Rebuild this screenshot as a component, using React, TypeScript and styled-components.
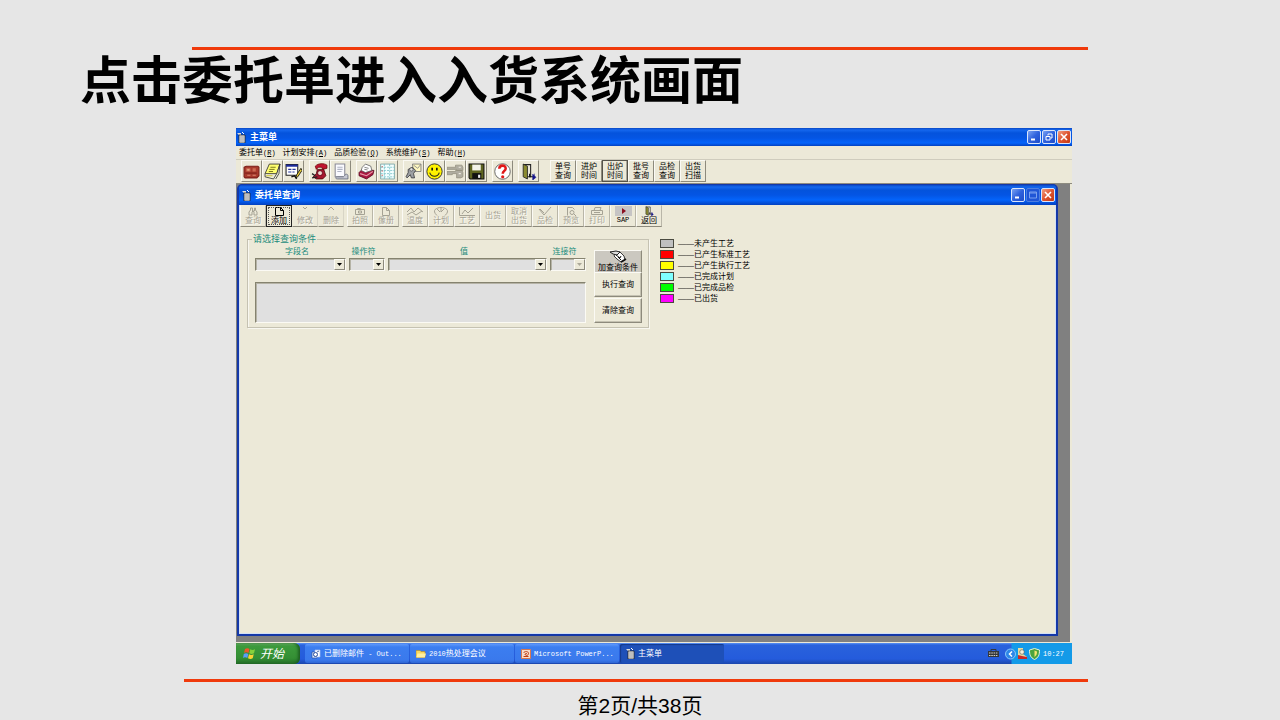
import React from 'react';
import styled, { createGlobalStyle, css } from 'styled-components';

const cjk = "'Liberation Sans', 'Noto Sans CJK SC', sans-serif";
const face = '#ece9d8';

const GlobalStyle = createGlobalStyle`
  *, *::before, *::after { box-sizing: border-box; }
  body { margin: 0; background: #e6e6e6; font-family: ${cjk}; color: #000; }
  button, select, textarea { font: inherit; color: inherit; margin: 0; padding: 0; border: 0; border-radius: 0; }
  svg { display: block; flex: none; }
`;

/* ---------- slide ---------- */
const Slide = styled.main`
  min-height: 100vh;
  padding-top: 47px;
  display: flex;
  flex-direction: column;
`;
const Rule = styled.hr<{ $left: string }>`
  width: auto;
  height: 3px;
  margin: 0 15% 0 ${p => p.$left};
  border: 0;
  background: #f03a0c;
`;
const Title = styled.h1`
  margin: 0 0 23px;
  padding-left: 80px;
  font: 700 51px/55px 'Noto Sans CJK SC', sans-serif;
`;
const PageNumber = styled.footer`
  padding-top: 9px;
  text-align: center;
  font-size: 21px;
  line-height: 29px;
`;
const Desktop = styled.section`
  margin: 0 208px 15px 236px;
  background: ${face};
  font-size: 8px;
  line-height: 10px;
`;

/* ---------- windows ---------- */
const TitleBar = styled.header<{ $child?: boolean }>`
  display: flex;
  align-items: center;
  gap: 4px;
  height: ${p => (p.$child ? 20 : 18)}px;
  padding: 0 1px 0 ${p => (p.$child ? 3 : 1)}px;
  background: linear-gradient(#0a48c4 0, #1467ee 2px, #0453dc 5px, #0455e4 10px, #0464fb 15px, #0341c0 100%);
  border-radius: ${p => (p.$child ? '4px 4px 0 0' : '0')};
  color: #fff;
  white-space: nowrap;
`;
const Caption = styled.h2`
  flex: 1;
  margin: 0;
  font-size: 9px;
  line-height: 12px;
  font-weight: 700;
`;
const WinButtons = styled.div`
  display: flex;
  gap: 1px;
`;
const WinButton = styled.button<{ $tone?: 'close' | 'off' }>`
  width: 14px;
  height: 14px;
  display: grid;
  place-items: center;
  border: 1px solid ${p => (p.$tone === 'off' ? '#4d7fe0' : '#dbe6fb')};
  border-radius: 2px;
  background: ${p =>
    p.$tone === 'close'
      ? 'linear-gradient(135deg, #f0a083, #de5430 50%, #c53a12)'
      : p.$tone === 'off'
      ? '#1f55d6'
      : 'linear-gradient(135deg, #7aa2f2, #2f62dd 50%, #1e4cc8)'};
`;
const MenuBar = styled.nav`
  display: flex;
  gap: 7px;
  height: 14px;
  padding: 0 3px;
  border-bottom: 1px solid #cfccbd;
`;
const MenuItem = styled.button`
  background: none;
  line-height: 12px;
  white-space: nowrap;
`;
const Latin = styled.span`
  font-family: 'Liberation Mono', monospace;
  font-size: 7px;
`;
const Toolbar = styled.div`
  display: flex;
  gap: 5px;
  height: 24px;
  padding: 0 5px 1px;
  border-bottom: 1px solid #8d8b80;
`;
const Group = styled.div<{ $wide?: boolean }>`
  display: flex;
  margin-left: ${p => (p.$wide ? 6 : 0)}px;
`;
const raised = css`
  background: ${face};
  border: 1px solid;
  border-color: #fbfaf4 #8d8a7c #8d8a7c #fbfaf4;
`;
const ToolButton = styled.button`
  ${raised}
  width: 21px;
  height: 22px;
  padding-top: 1px;
  display: grid;
  place-items: center;
`;
const TextTool = styled.button<{ $active?: boolean }>`
  ${raised}
  width: 26px;
  height: 22px;
  line-height: 9px;
  ${p => p.$active && 'border-color: #55534a; box-shadow: inset -1px -1px #a9a698;'}
`;

const Mdi = styled.div`
  padding: 0 12px 6px 1px;
  margin-right: 2px;
  background: #808080;
`;
const Child = styled.section`
  border: 1px solid #1438a8;
  border-width: 1px 2px 2px 2px;
  border-radius: 5px 5px 0 0;
  background: #0453dc;
`;
const Client = styled.div`
  min-height: 429px;
  background: ${face};
  border: 1px solid #d3e0f5;
  border-top: 0;
`;
const ChildTools = styled.div`
  display: flex;
  gap: 3px;
  height: 22px;
`;
const ChildTool = styled.button<{ $state?: 'focus' | 'on' | 'flat' }>`
  ${raised}
  width: 26px;
  height: 22px;
  display: flex;
  flex-direction: column;
  align-items: center;
  justify-content: flex-end;
  line-height: 9px;
  padding-bottom: 1px;
  border-top-color: ${face};
  border-right-color: #b9b6a8;
  color: #a5a294;
  text-shadow: 1px 1px #fbfaf4;
  ${p => (p.$state === 'focus' || p.$state === 'on') && 'color: #000; text-shadow: none;'}
  ${p => p.$state === 'flat' && `border-left-color: ${face}; border-right-color: #d8d5c6;`}
  ${p => p.$state === 'focus' && 'border-color: #222; outline: 1px dotted #555; outline-offset: -3px;'}
`;
const Lines = styled.span`
  margin: auto 0;
  line-height: 9px;
`;

/* ---------- query form ---------- */
const Work = styled.div`
  display: flex;
  align-items: flex-start;
  gap: 11px;
  padding: 7px;
`;
const Query = styled.fieldset`
  width: 402px;
  margin: 0;
  padding: 0 6px 4px 7px;
  border: 1px solid #c5c2b2;
  box-shadow: inset 1px 0 #f8f7f0, 1px 1px #f8f7f0;
  display: flex;
  justify-content: space-between;
`;
const Legend = styled.legend`
  padding: 0 1px;
  margin-left: -3px;
  font-size: 9px;
  line-height: 10px;
  color: #1c8c7c;
`;
const Fields = styled.div`
  display: grid;
  grid-template-columns: 91px 36px 159px 36px;
  column-gap: 3px;
  align-content: start;
`;
const Field = styled.label`
  display: flex;
  flex-direction: column;
  gap: 2px;
  color: #1c8c7c;
  line-height: 9px;
  padding-top: 3px;
`;
const FieldName = styled.span`
  padding-right: 7px;
  text-align: center;
`;
const sunken = css`
  background: #e0e0e0;
  border: 1px solid;
  border-color: #85836f #fbfaf4 #fbfaf4 #85836f;
  box-shadow: inset 1px 1px #b5b3a6;
`;
const Combo = styled.span`
  ${sunken}
  display: flex;
  height: 13px;
`;
const Select = styled.select`
  flex: 1;
  min-width: 0;
  appearance: none;
  background: transparent;
`;
const Arrow = styled.span<{ $off?: boolean }>`
  ${raised}
  width: 11px;
  display: grid;
  place-items: center;
  color: ${p => (p.$off ? '#aaa799' : '#000')};
`;
const Conditions = styled.textarea`
  ${sunken}
  grid-column: 1 / -1;
  height: 41px;
  margin-top: 11px;
  resize: none;
`;
const Actions = styled.div`
  width: 48px;
  padding-top: 6px;
  display: flex;
  flex-direction: column;
  gap: 1px;
`;
const Action = styled.button<{ $hot?: boolean }>`
  ${raised}
  height: ${p => (p.$hot ? 24 : 25)}px;
  box-shadow: inset -1px -1px #c5c2b2;
  display: flex;
  flex-direction: column;
  align-items: center;
  justify-content: ${p => (p.$hot ? 'flex-end' : 'center')};
  ${p => p.$hot && 'background: #cbc8c0; margin-bottom: -3px;'}
`;
const KeyList = styled.ul`
  margin: 4px 0 0;
  padding: 0;
  list-style: none;
`;
const KeyItem = styled.li`
  display: flex;
  align-items: center;
  gap: 4px;
  height: 11px;
  white-space: nowrap;
`;
const Swatch = styled.span<{ $color: string }>`
  width: 14px;
  height: 9px;
  border: 1px solid #4a4a40;
  background: ${p => p.$color};
`;

/* ---------- taskbar ---------- */
const Taskbar = styled.footer`
  display: flex;
  height: 21px;
  margin-top: 1px;
  background: linear-gradient(#5a93f5 0, #2a62dc 2px, #245bdc 16px, #1b46ac 100%);
  color: #fff;
`;
const Start = styled.button`
  width: 64px;
  display: flex;
  align-items: center;
  gap: 4px;
  padding-left: 7px;
  border-radius: 0 6px 6px 0;
  background: linear-gradient(#6db56b 0, #3c9a3c 3px, #348f34 15px, #256f28 100%);
  box-shadow: inset -2px 0 3px #1d5f22;
  color: #fff;
  font-size: 12px;
  font-style: italic;
`;
const Tasks = styled.div`
  flex: 1;
  display: flex;
  gap: 1px;
  padding: 1px 5px;
`;
const Task = styled.button<{ $active?: boolean }>`
  flex: 0 1 104px;
  display: flex;
  align-items: center;
  gap: 3px;
  padding-left: 6px;
  border-radius: 2px;
  background: ${p => (p.$active ? '#1e50b8' : 'linear-gradient(#5e98fa, #3c7ef0 3px, #3a79ec 16px, #2f66d4)')};
  box-shadow: ${p => (p.$active ? 'inset 1px 1px 1px #143a8c' : 'none')};
  color: #fff;
  white-space: nowrap;
`;
const Keyboard = styled.div`
  display: grid;
  place-items: center;
  padding-right: 6px;
`;
const Tray = styled.div`
  width: 67px;
  display: flex;
  align-items: center;
  gap: 1px;
  background: linear-gradient(90deg, transparent 6px, #139ae8 7px);
`;
const Clock = styled.time`
  padding-left: 2px;
  font: 7px/10px 'Liberation Mono', monospace;
`;

/* ---------- drawings ---------- */
const Svg = ({ w = 17, h = 17, box = '0 0 16 16', children }: { w?: number; h?: number; box?: string; children: React.ReactNode }) => (
  <svg width={w} height={h} viewBox={box} fill="none" aria-hidden="true">{children}</svg>
);

const AppIcon = () => (
  <Svg w={9} h={11} box="0 0 9 11">
    <path d="M0 1h4v2H2z" fill="#ddd" />
    <path d="M2 3h6v8H2z" fill="#eee" stroke="#222" strokeWidth=".8" />
    <path d="M3.500 5h1M5.500 5h1M3.500 7h1M5.500 7h1M3.500 9h1M5.500 9h1" stroke="#333" strokeWidth="1" />
    <path d="M5 0l2 2" stroke="#fff" />
  </Svg>
);

const Door = ({ size = 17 }: { size?: number }) => (
  <Svg w={size} h={size}>
    <path d="M3 1.500h7V13H7" stroke="#222" />
    <path d="M3 1l4 2v12l-4-2z" fill="#8c8c30" stroke="#222" strokeWidth=".8" />
    <path d="M9 10v3h4" stroke="#111" />
    <path d="M12 10.500l3 3-3 2.500zM13.500 10v2" fill="#14148c" stroke="#14148c" strokeWidth=".6" />
  </Svg>
);

const mainIcons: Record<string, React.ReactNode> = {
  委托单: (
    <Svg>
      <path d="M1 4l2-1h11l1 1v8l-2 2H2l-1-1z" fill="#a83a2c" stroke="#7c1f18" />
      <path d="M3 5h4v3H3zM9 5h3v3H9z" fill="#cc6c54" />
      <path d="M4 6h2v1H4z" fill="#f0c898" />
      <path d="M2 9.500h11" stroke="#7c2018" />
      <path d="M4 11.500h3M9 11.500h3" stroke="#d88870" />
    </Svg>
  ),
  便笺: (
    <Svg>
      <path d="M5 1h10l-3 9H1z" fill="#ffff70" stroke="#333" strokeWidth=".8" />
      <path d="M1 10v3l8 2 3-5 3-9-1 9-3 5" fill="#f8f8e0" stroke="#333" strokeWidth=".8" />
      <path d="M6 4h5M5 6h5M4.500 8h4" stroke="#77761a" strokeWidth=".9" />
      <path d="M2 12h6" stroke="#c8c030" />
    </Svg>
  ),
  计划: (
    <Svg>
      <path d="M1 1.500h11v10H1z" fill="#fff" stroke="#222" />
      <path d="M1 1.500h11v2H1z" fill="#1c2a9c" />
      <path d="M3 6h3M7 6h3M3 8.500h3M7 8.500h2" stroke="#26369c" />
      <path d="M15 5l-4 6-1 3 2-1 4-6z" fill="#e8cf38" stroke="#111" strokeWidth=".8" />
      <path d="M6 13l3-1 2 3" stroke="#111" strokeWidth="1.300" />
    </Svg>
  ),
  电话: (
    <Svg>
      <path d="M4 3c3-3 8-3 11-1v3l-4 1-1-2H7L5 6z" fill="#c01530" stroke="#600" strokeWidth=".7" />
      <path d="M6 6l6 0 2 6-3 3H5l-3-2 3-3z" fill="#a81830" stroke="#400" strokeWidth=".7" />
      <circle cx="8.500" cy="9.500" r="2.300" fill="#f4d8d0" stroke="#501" strokeWidth=".7" />
      <path d="M1 10l3 2M1 14l5-1" stroke="#222" strokeWidth="1.200" />
    </Svg>
  ),
  文档: (
    <Svg>
      <path d="M3 1h9v12H3z" fill="#fafaff" stroke="#8c8c98" />
      <path d="M5 4h5M5 6h5M5 8h4" stroke="#b0b4c4" />
      <path d="M12 12c0-2 3-2 3 0v3H5c-2 0-2-2 0-2h6" fill="#c8cad4" stroke="#666c7c" strokeWidth=".8" />
    </Svg>
  ),
  归档: (
    <Svg>
      <path d="M1 9l3-3 11 1-1 4-6 4-7-3z" fill="#a81840" stroke="#5a0c24" strokeWidth=".8" />
      <path d="M4 4l3-3 5 2 1 4-6 2-4-2z" fill="#fff" stroke="#555" strokeWidth=".7" />
      <path d="M6 4l4 1M6 6l3 .5" stroke="#777" strokeWidth=".8" />
      <path d="M2 10l6 2 6-4" stroke="#e898a8" />
    </Svg>
  ),
  表格: (
    <Svg>
      <path d="M1.500 1h13v14h-13z" fill="#f4ffff" stroke="#78a4a4" strokeWidth=".8" />
      <path d="M1.500 4h13M1.500 7h13M1.500 10h13M1.500 13h13M5 1v14M10 1v14" stroke="#6cbcc4" strokeWidth=".7" strokeDasharray="2 1" />
      <path d="M3 3v1M3 7v1M3 11v1" stroke="#c03030" />
    </Svg>
  ),
  用户: (
    <Svg>
      <path d="M7 1h8v7H8z" fill="#fff8c0" stroke="#777" strokeWidth=".8" />
      <path d="M8 2l4 3 3-4" stroke="#888" strokeWidth=".8" />
      <path d="M3 6l4-2 3 3-2 3 1 4H6l-1-3-3 3-1-1 2-4z" fill="#9da0a4" stroke="#3c3c40" strokeWidth=".8" />
      <circle cx="6" cy="6" r="1.600" fill="#e0e0e0" stroke="#444" strokeWidth=".6" />
    </Svg>
  ),
  笑脸: (
    <Svg>
      <circle cx="8" cy="8" r="7.200" fill="#fff200" stroke="#333" strokeWidth=".9" />
      <path d="M5.800 4.500v2.500M10.200 4.500v2.500" stroke="#111" strokeWidth="1.500" />
      <path d="M3.500 9c1.500 4.600 7.500 4.600 9 0" stroke="#222" strokeWidth="1" />
    </Svg>
  ),
  钥匙: (
    <Svg>
      <path d="M0 4h8V2h6l1 2v3H9V6H0zM0 8h8V7h6l1 2v4l-2 1H9v-4H5v1H0z" fill="#b0ada0" stroke="#94917f" strokeWidth=".7" />
      <path d="M11 4h2M11 10h2" stroke="#efece0" />
    </Svg>
  ),
  保存: (
    <Svg>
      <path d="M1 1h14v14H2l-1-1z" fill="#5e6420" stroke="#111" />
      <path d="M4 1.500h8V7H4z" fill="#f4f4e8" />
      <path d="M4 9.500h8.500V15H4z" fill="#111" />
      <path d="M9.500 11h2v3h-2z" fill="#eee" />
    </Svg>
  ),
};

const HelpIcon = () => (
  <Svg>
    <circle cx="8" cy="8" r="7.300" fill="#fff" stroke="#555" strokeWidth=".8" />
    <path d="M5 5.500C5 1.500 11 1.500 11 5.200c0 2.200-2.800 2.300-2.800 4.800" stroke="#e01818" strokeWidth="2.400" />
    <circle cx="8.200" cy="13" r="1.500" fill="#e01818" />
  </Svg>
);

const Glyph = ({ d }: { d: string }) => (
  <Svg w={18} h={9} box="0 0 18 9">
    <path d={d} stroke="currentColor" strokeWidth="1" />
  </Svg>
);

const Triangle = () => (
  <Svg w={5} h={3} box="0 0 5 3"><path d="M0 0h5L2.500 3z" fill="currentColor" /></Svg>
);

const PenHand = () => (
  <Svg w={18} h={13} box="0 0 18 13">
    <path d="M6 4l5-2 4 4 1 4-4 2-4-3-3-3z" fill="#fff" stroke="#222" strokeWidth=".9" />
    <path d="M1 2l6-1 4 1-3 3-4-1z" fill="#ddd" stroke="#222" strokeWidth="1" />
    <path d="M7 5l4 3 1-2M9 7l3 3" stroke="#111" strokeWidth="1" />
    <path d="M12 12l5-3" stroke="#111" strokeWidth="1.800" />
  </Svg>
);

const Minimize = () => <Svg w={8} h={8} box="0 0 8 8"><path d="M1 6.500h4" stroke="#fff" strokeWidth="2" /></Svg>;
const Restore = () => (
  <Svg w={8} h={8} box="0 0 8 8"><path d="M3 2.500V1h4v4H5.500M1 3.500h4V7H1z" stroke="#fff" /></Svg>
);
const Maximize = () => <Svg w={8} h={8} box="0 0 8 8"><path d="M.5 1h7v6h-7zM.5 2h7" stroke="#7aa0ee" /></Svg>;
const Close = () => <Svg w={8} h={8} box="0 0 8 8"><path d="M1 1l6 6M7 1L1 7" stroke="#fff" strokeWidth="1.600" /></Svg>;

const Flag = () => (
  <Svg w={13} h={13} box="0 0 13 13">
    <path d="M2 2c1.500-1 3-1 4.500 0L5.500 6C4 5 2.500 5 1 6z" fill="#f0562c" />
    <path d="M7.300 2.300c1.500 1 3 1 4.700 0L11 6.300c-1.500 1-3 1-4.700 0z" fill="#86d03c" />
    <path d="M.8 7c1.500-1 3-1 4.500 0l-1 4C3 10 1 10 0 11z" fill="#5c9cf8" />
    <path d="M6 7.300c1.500 1 3 1 4.700 0l-1 4c-1.500 1-3 1-4.700 0z" fill="#fcd434" />
  </Svg>
);
const MailIcon = () => (
  <Svg w={10} h={10} box="0 0 10 10">
    <path d="M1 3h5v6H1z" fill="#dce8fc" stroke="#2c50a0" strokeWidth=".7" />
    <path d="M4 1h5v7H4z" fill="#fff" stroke="#a8c0f0" strokeWidth=".7" />
    <circle cx="4.500" cy="5.500" r="2" fill="#fff" stroke="#284c9c" />
    <path d="M6 3l2-1" stroke="#506ca8" />
  </Svg>
);
const FolderIcon = () => (
  <Svg w={10} h={10} box="0 0 10 10">
    <path d="M0 1.500h4l1 1h4v6H0z" fill="#f8d860" stroke="#b88c1c" strokeWidth=".6" />
    <path d="M1.500 4.500H10L8.800 8.500H.3z" fill="#fff0a0" />
  </Svg>
);
const SlidesIcon = () => (
  <Svg w={10} h={10} box="0 0 10 10">
    <path d="M.5.500h9v9h-9z" fill="#f8dccc" stroke="#d87850" />
    <path d="M2.500 4c1-2 5-2 5 .5S4 7 4 5l2-.5" stroke="#c03c14" />
    <path d="M2.500 7.500h5" stroke="#c03c14" />
  </Svg>
);

/* ---------- data ---------- */
const menus = [['委托单', 'R'], ['计划安排', 'A'], ['品质检验', 'Q'], ['系统维护', 'S'], ['帮助', 'H']];
const toolGroups = [['委托单', '便笺', '计划'], ['电话', '文档'], ['归档', '表格'], ['用户', '笑脸', '钥匙', '保存']];
const textTools = [['单号', '查询'], ['进炉', '时间'], ['出炉', '时间'], ['批号', '查询'], ['品检', '查询'], ['出货', '扫描']];

type Tool = { label: string; d?: string; state?: 'focus' | 'on' | 'flat' };
const childTools: Tool[][] = [
  [
    { label: '查询', d: 'M6.500 1v2L5 5v3h3V5l1-1 1 1v3h3V5l-1.500-2V1h-1v3h-2V1z' },
    { label: '添加', d: 'M5.500.5h5l3 3v5h-8zM10.500.5v3h3', state: 'focus' },
    { label: '修改', d: 'M7 0l2 2 2-2', state: 'flat' },
    { label: '删除', d: 'M6 3l3-3 3 3', state: 'flat' },
  ],
  [
    { label: '拍照', d: 'M4.500 2.500h9v5h-9zM6.500 2.500v-1h3v1M7.500 4h3v2h-3z' },
    { label: '像册', d: 'M5.500.5h4l3 3v5h-7zM9.500.5v3h3' },
  ],
  [
    { label: '温度', d: 'M1 5l4-4 3 4 4-4 5 4M1 8l5-3 4 3 6-4' },
    { label: '计划', d: 'M5 8.500C-1 3 5 .5 9 .5S19 3 13 8.500M9 1v4l3-3M5 2l3 3' },
    { label: '工艺', d: 'M1.500 0v8.500H17M4 7l3-4 3 3 5-5' },
    { label: '出货' },
    { label: '取消出货' },
    { label: '品检', d: 'M3 2l5 6 7-8M4 2l4 4' },
    { label: '预览', d: 'M5.500 8.500v-8h5l2 2M10 3.500a2 2 0 110 4 2 2 0 010-4M12 7l2 2' },
    { label: '打印', d: 'M6 3.500l1-3h6l-1 3M3.500 3.500h11v4h-11zM6 5.500h6' },
    { label: 'SAP', state: 'on' },
    { label: '返回', state: 'on' },
  ],
];
const keys = [
  ['#c0c0c0', '未产生工艺'],
  ['#ff0000', '已产生标准工艺'],
  ['#ffff00', '已产生执行工艺'],
  ['#80ffff', '已完成计划'],
  ['#00ff00', '已完成品检'],
  ['#ff00ff', '已出货'],
];
const fields = ['字段名', '操作符', '值', '连接符'];

const ToolContent = ({ tool }: { tool: Tool }) => {
  if (tool.label === '取消出货') return <Lines>取消<br />出货</Lines>;
  if (tool.label === '出货') return <Lines>出货</Lines>;
  if (tool.label === 'SAP')
    return (
      <>
        <Svg w={17} h={10} box="0 0 17 10">
          <path d="M0 0h17v10H0z" fill="#c6c4c4" />
          <path d="M7 2l4 3-4 3z" fill="#8c1020" />
        </Svg>
        <Latin>SAP</Latin>
      </>
    );
  if (tool.label === '返回') return <><Door size={10} />返回</>;
  return <>{tool.d && <Glyph d={tool.d} />}{tool.label}</>;
};

export default function App() {
  return (
    <Slide>
      <GlobalStyle />
      <Rule $left="15%" />
      <Title>点击委托单进入入货系统画面</Title>
      <Desktop>
        <TitleBar>
          <AppIcon />
          <Caption>主菜单</Caption>
          <WinButtons>
            <WinButton aria-label="最小化"><Minimize /></WinButton>
            <WinButton aria-label="还原"><Restore /></WinButton>
            <WinButton aria-label="关闭" $tone="close"><Close /></WinButton>
          </WinButtons>
        </TitleBar>
        <MenuBar>
          {menus.map(([name, key]) => (
            <MenuItem key={name}>{name}<Latin>(<u>{key}</u>)</Latin></MenuItem>
          ))}
        </MenuBar>
        <Toolbar>
          {toolGroups.map(group => (
            <Group key={group[0]}>
              {group.map(name => <ToolButton key={name} aria-label={name}>{mainIcons[name]}</ToolButton>)}
            </Group>
          ))}
          <Group><ToolButton aria-label="帮助"><HelpIcon /></ToolButton></Group>
          <Group><ToolButton aria-label="退出"><Door /></ToolButton></Group>
          <Group $wide>
            {textTools.map(([a, b], i) => (
              <TextTool key={a + b} $active={i === 2}>{a}<br />{b}</TextTool>
            ))}
          </Group>
        </Toolbar>
        <Mdi>
          <Child>
            <TitleBar $child>
              <AppIcon />
              <Caption>委托单查询</Caption>
              <WinButtons>
                <WinButton aria-label="最小化"><Minimize /></WinButton>
                <WinButton aria-label="最大化" $tone="off"><Maximize /></WinButton>
                <WinButton aria-label="关闭" $tone="close"><Close /></WinButton>
              </WinButtons>
            </TitleBar>
            <Client>
              <ChildTools>
                {childTools.map((group, i) => (
                  <Group key={i}>
                    {group.map(tool => (
                      <ChildTool key={tool.label} $state={tool.state}><ToolContent tool={tool} /></ChildTool>
                    ))}
                  </Group>
                ))}
              </ChildTools>
              <Work>
                <Query>
                  <Legend>请选择查询条件</Legend>
                  <Fields>
                    {fields.map((name, i) => (
                      <Field key={name}>
                        <FieldName>{name}</FieldName>
                        <Combo>
                          <Select disabled={i === 3} />
                          <Arrow $off={i === 3}><Triangle /></Arrow>
                        </Combo>
                      </Field>
                    ))}
                    <Conditions aria-label="查询条件" />
                  </Fields>
                  <Actions>
                    <Action $hot><PenHand />加查询条件</Action>
                    <Action>执行查询</Action>
                    <Action>清除查询</Action>
                  </Actions>
                </Query>
                <KeyList>
                  {keys.map(([color, text]) => (
                    <KeyItem key={text}><Swatch $color={color} />——{text}</KeyItem>
                  ))}
                </KeyList>
              </Work>
            </Client>
          </Child>
        </Mdi>
        <Taskbar>
          <Start><Flag />开始</Start>
          <Tasks>
            <Task><MailIcon /><span>已删除邮件<Latin> - Out...</Latin></span></Task>
            <Task><FolderIcon /><span><Latin>2010</Latin>热处理会议</span></Task>
            <Task><SlidesIcon /><Latin>Microsoft PowerP...</Latin></Task>
            <Task $active><AppIcon />主菜单</Task>
          </Tasks>
          <Keyboard>
            <Svg w={11} h={9} box="0 0 11 9">
              <path d="M3 2V.5h5V2" stroke="#33373c" />
              <path d="M0 2h11v6H0z" fill="#33373c" />
              <path d="M1 4h9M1 6.500h9" stroke="#d8d4c8" strokeDasharray="1.500 .8" />
            </Svg>
          </Keyboard>
          <Tray>
            <Svg w={11} h={12} box="0 0 11 12">
              <circle cx="5.500" cy="6" r="5" fill="#2c86e8" stroke="#8cc8f8" />
              <path d="M7 3.500L4.500 6 7 8.500" stroke="#fff" strokeWidth="1.500" />
            </Svg>
            <Svg w={11} h={11} box="0 0 11 11">
              <path d="M1 0h5v6l4 3v2H1z" fill="#e8dca0" />
              <circle cx="5" cy="4" r="2.300" fill="#f8f0d8" stroke="#555" strokeWidth=".6" />
              <path d="M1 7l4 1 5 1v2H1z" fill="#c82828" />
            </Svg>
            <Svg w={11} h={12} box="0 0 11 12">
              <path d="M5.500.5l5 1.500c0 5-1 7.500-5 9.500C1.500 9.500.5 7 .5 2z" fill="#4ca43c" stroke="#e8f4d8" />
              <path d="M5.500 2.500l2.500 1c0 2.500-.5 4-2.500 5.500z" fill="#f4e46c" />
            </Svg>
            <Clock>10:27</Clock>
          </Tray>
        </Taskbar>
      </Desktop>
      <Rule $left="184px" />
      <PageNumber>第2页/共38页</PageNumber>
    </Slide>
  );
}
